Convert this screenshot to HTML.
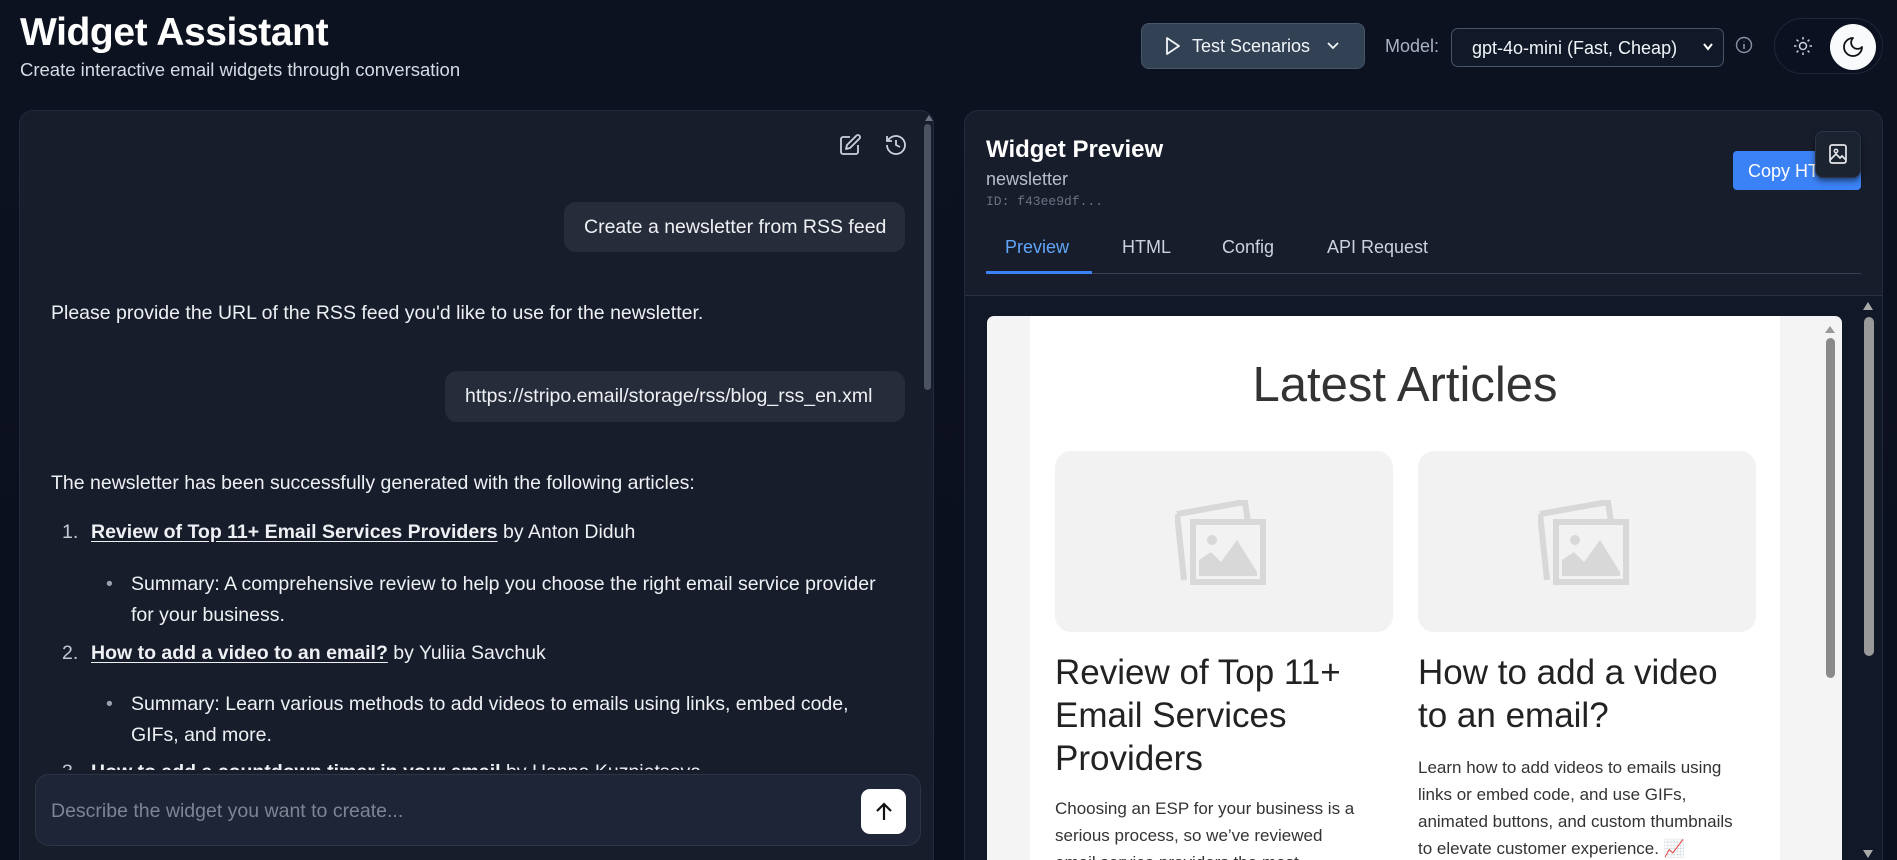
<!DOCTYPE html>
<html><head><meta charset="utf-8"><style>
*{box-sizing:border-box;margin:0;padding:0}
html{height:860px;overflow:hidden}
body{width:1897px;height:860px;overflow:hidden;background:linear-gradient(180deg,#0d1221 0%,#0a0f1d 100%);font-family:"Liberation Sans",sans-serif;color:#e8eaf0;position:relative}
.abs{position:absolute}
h1{position:absolute;left:20px;top:11px;font-size:39px;font-weight:700;color:#fff;letter-spacing:-0.4px}
.sub{left:20px;top:59px;font-size:18.5px;color:#d6dae2}
.btn{left:1141px;top:23px;width:224px;height:46px;background:#334155;border:1px solid #475569;border-radius:8px;display:flex;align-items:center;gap:10px;padding-left:22px;font-size:18px;color:#f1f5f9}
.sel{left:1451px;top:28px;width:273px;height:39px;background:#111827;border:1px solid #475569;border-radius:7px;font-size:18px;color:#f1f5f9;padding:9px 0 0 20px}
.panel{background:#171d2b;border:1px solid #232a3a;border-bottom:none;border-radius:14px 14px 0 0}
.bub{background:#262c39;border-radius:12px;font-size:19.5px;color:#eef0f4;padding:0 20px;display:flex;align-items:center;white-space:nowrap}
.t{font-size:19.5px;color:#eef0f4;white-space:nowrap}
.t u{font-weight:700;text-decoration:underline;text-underline-offset:3px}
.tab{top:237px;font-size:18px;color:#cbd2dc}
.card{background:#f2f2f2;border-radius:16px;width:338px;height:181px;top:451px}
.h3{font-size:35px;line-height:43px;color:#222;font-family:"Liberation Sans",Arial,sans-serif;width:340px}
.p{font-size:17px;line-height:27px;color:#333;width:340px}
</style></head><body>
<h1>Widget Assistant</h1>
<div class="abs sub">Create interactive email widgets through conversation</div>

<div class="abs btn"><svg width="18" height="20" viewBox="0 0 18 20"><path d="M3 2 L15 10 L3 18 Z" fill="none" stroke="#f1f5f9" stroke-width="1.8" stroke-linejoin="round"/></svg>Test Scenarios<svg width="14" height="10" viewBox="0 0 14 10" style="margin-left:6px"><path d="M2 2 L7 7 L12 2" fill="none" stroke="#f1f5f9" stroke-width="1.8"/></svg></div>
<div class="abs" style="left:1385px;top:36px;font-size:18px;color:#aab3c2">Model:</div>
<div class="abs sel">gpt-4o-mini (Fast, Cheap)<svg class="abs" style="left:250px;top:13px" width="12" height="10" viewBox="0 0 12 10"><path d="M2 2 L6 7 L10 2" fill="none" stroke="#fff" stroke-width="2"/></svg></div>
<svg class="abs" style="left:1735px;top:36px" width="18" height="18" viewBox="0 0 18 18"><circle cx="9" cy="9" r="7.5" fill="none" stroke="#8a93a3" stroke-width="1.4"/><path d="M9 8v5M9 5.5v.5" stroke="#8a93a3" stroke-width="1.6"/></svg>
<div class="abs" style="left:1774px;top:18px;width:109px;height:56px;border-radius:28px;background:#0b1120;border:1px solid #1f2737"></div>
<svg class="abs" style="left:1792px;top:35px" width="22" height="22" viewBox="0 0 22 22"><circle cx="11" cy="11" r="3.5" fill="none" stroke="#cbd2dc" stroke-width="1.5"/><g stroke="#cbd2dc" stroke-width="1.5"><path d="M11 2v2.5M11 17.5V20M2 11h2.5M17.5 11H20M4.6 4.6l1.8 1.8M15.6 15.6l1.8 1.8M4.6 17.4l1.8-1.8M15.6 6.4l1.8-1.8"/></g></svg>
<div class="abs" style="left:1830px;top:24px;width:46px;height:46px;border-radius:50%;background:#f8fafc"></div>
<svg class="abs" style="left:1841px;top:35px" width="24" height="24" viewBox="0 0 24 24"><path d="M12 3a6 6 0 0 0 9 9 9 9 0 1 1-9-9Z" fill="none" stroke="#111" stroke-width="1.8" stroke-linejoin="round"/></svg>

<!-- left panel -->
<div class="abs panel" style="left:19px;top:110px;width:915px;height:750px"></div>
<div class="abs" style="left:925px;top:115px;width:0;height:0;border-left:4px solid transparent;border-right:4px solid transparent;border-bottom:6px solid #6b7280"></div>
<div class="abs" style="left:924px;top:124px;width:7px;height:266px;background:#4b5260;border-radius:4px"></div>
<svg class="abs" style="left:838px;top:133px" width="24" height="24" viewBox="0 0 24 24"><path d="M12 4H5a2 2 0 0 0-2 2v13a2 2 0 0 0 2 2h13a2 2 0 0 0 2-2v-7" fill="none" stroke="#cbd2dc" stroke-width="1.8"/><path d="M18.4 2.6a2 2 0 0 1 3 3L12 15l-4 1 1-4Z" fill="none" stroke="#cbd2dc" stroke-width="1.8" stroke-linejoin="round"/></svg>
<svg class="abs" style="left:884px;top:133px" width="24" height="24" viewBox="0 0 24 24"><path d="M3 12a9 9 0 1 0 9-9 9.7 9.7 0 0 0-6.7 2.7L3 8" fill="none" stroke="#cbd2dc" stroke-width="1.8"/><path d="M3 3v5h5M12 7v5l4 2" fill="none" stroke="#cbd2dc" stroke-width="1.8"/></svg>
<div class="abs bub" style="left:564px;top:202px;width:341px;height:50px">Create a newsletter from RSS feed</div>
<div class="abs t" style="left:51px;top:302px">Please provide the URL of the RSS feed you'd like to use for the newsletter.</div>
<div class="abs bub" style="left:445px;top:371px;width:460px;height:51px">https://stripo.email/storage/rss/blog_rss_en.xml</div>
<div class="abs t" style="left:51px;top:472px">The newsletter has been successfully generated with the following articles:</div>
<div class="abs t" style="left:62px;top:521px;color:#c5cad3">1.</div>
<div class="abs t" style="left:91px;top:521px"><u>Review of Top 11+ Email Services Providers</u> by Anton Diduh</div>
<div class="abs t" style="left:106px;top:573px;color:#9aa1ad">•</div>
<div class="abs t" style="left:131px;top:569px;line-height:31px">Summary: A comprehensive review to help you choose the right email service provider<br>for your business.</div>
<div class="abs t" style="left:62px;top:642px;color:#c5cad3">2.</div>
<div class="abs t" style="left:91px;top:642px"><u>How to add a video to an email?</u> by Yuliia Savchuk</div>
<div class="abs t" style="left:106px;top:693px;color:#9aa1ad">•</div>
<div class="abs t" style="left:131px;top:689px;line-height:31px">Summary: Learn various methods to add videos to emails using links, embed code,<br>GIFs, and more.</div>
<div class="abs t" style="left:62px;top:761px;color:#c5cad3">3.</div>
<div class="abs t" style="left:91px;top:761px"><u>How to add a countdown timer in your email</u> by Hanna Kuznietsova</div>
<div class="abs" style="left:20px;top:770px;width:903px;height:100px;background:#171d2b"></div>
<div class="abs" style="left:35px;top:774px;width:886px;height:72px;background:#1e2536;border:1px solid #2c3446;border-radius:14px"></div>
<div class="abs t" style="left:51px;top:800px;color:#7d8594">Describe the widget you want to create...</div>
<div class="abs" style="left:861px;top:789px;width:45px;height:45px;background:#fff;border-radius:9px"></div>
<svg class="abs" style="left:872px;top:800px" width="24" height="24" viewBox="0 0 24 24"><path d="M12 20V4M5 11l7-7 7 7" fill="none" stroke="#111" stroke-width="2.2"/></svg>

<!-- right panel -->
<div class="abs panel" style="left:964px;top:110px;width:919px;height:750px;overflow:hidden">
 <div class="abs" style="left:0;top:184px;width:919px;height:600px;background:#111827;border-top:1px solid #2a3243"></div>
</div>
<div class="abs" style="left:986px;top:136px;font-size:24px;font-weight:700;color:#fff">Widget Preview</div>
<div class="abs" style="left:986px;top:169px;font-size:18px;color:#b8bfcb">newsletter</div>
<div class="abs" style="left:986px;top:194px;font-size:13px;font-family:'Liberation Mono',monospace;color:#6b7280">ID: f43ee9df...</div>
<div class="abs" style="left:1733px;top:151px;width:128px;height:39px;background:#3b82f6;border-radius:4px;color:#fff;font-size:18px;padding:10px 0 0 15px">Copy HTML</div>
<div class="abs" style="left:1815px;top:131px;width:46px;height:47px;background:#1b2230;border:1px solid #2c3446;border-radius:8px;box-shadow:0 3px 6px rgba(0,0,0,.5)"></div>
<svg class="abs" style="left:1827px;top:143px" width="22" height="22" viewBox="0 0 22 22"><rect x="3" y="2" width="16" height="18" rx="2" fill="none" stroke="#e5e7eb" stroke-width="1.7"/><circle cx="9" cy="8" r="1.7" fill="none" stroke="#e5e7eb" stroke-width="1.5"/><path d="M3 17l6-6 4 4 2-2 4 4" fill="none" stroke="#e5e7eb" stroke-width="1.7"/></svg>
<div class="abs tab" style="left:1005px;color:#60a5fa">Preview</div>
<div class="abs tab" style="left:1122px">HTML</div>
<div class="abs tab" style="left:1222px">Config</div>
<div class="abs tab" style="left:1327px">API Request</div>
<div class="abs" style="left:986px;top:273px;width:875px;height:1px;background:#374151"></div>
<div class="abs" style="left:986px;top:271px;width:106px;height:3px;background:#3b82f6"></div>
<div class="abs" style="left:1863px;top:302px;width:0;height:0;border-left:5px solid transparent;border-right:5px solid transparent;border-bottom:8px solid #aaa"></div>
<div class="abs" style="left:1864px;top:317px;width:10px;height:339px;background:#9a9a9a;border-radius:5px"></div>
<div class="abs" style="left:1863px;top:850px;width:0;height:0;border-left:5px solid transparent;border-right:5px solid transparent;border-top:8px solid #aaa"></div>

<!-- preview iframe -->
<div class="abs" style="left:987px;top:316px;width:855px;height:560px;background:#f4f4f4;border-radius:7px;overflow:hidden">
 <div class="abs" style="left:43px;top:0;width:750px;height:560px;background:#fff"></div>
 <div class="abs" style="left:839px;top:22px;width:9px;height:340px;background:#8a8a8a;border-radius:5px"></div>
 <div class="abs" style="left:838px;top:10px;width:0;height:0;border-left:5px solid transparent;border-right:5px solid transparent;border-bottom:7px solid #999"></div>
</div>
<div class="abs" style="left:1030px;top:357px;width:750px;text-align:center;font-size:49px;color:#333">Latest Articles</div>
<div class="abs card" style="left:1055px"></div>
<div class="abs card" style="left:1418px"></div>
<svg class="abs" style="left:1175px;top:500px" width="92" height="86" viewBox="0 0 92 86"><path d="M2 14 L70 2 L73 22" fill="none" stroke="#d8d8d8" stroke-width="6"/><path d="M2 14 L9 80" fill="none" stroke="#d8d8d8" stroke-width="6"/><rect x="18" y="22" width="70" height="60" fill="none" stroke="#d8d8d8" stroke-width="6"/><circle cx="37" cy="40" r="5" fill="#d8d8d8"/><path d="M24 76 L24 60 L36 52 L46 62 L62 40 L82 72 L82 76Z" fill="#d8d8d8"/></svg>
<svg class="abs" style="left:1538px;top:500px" width="92" height="86" viewBox="0 0 92 86"><path d="M2 14 L70 2 L73 22" fill="none" stroke="#d8d8d8" stroke-width="6"/><path d="M2 14 L9 80" fill="none" stroke="#d8d8d8" stroke-width="6"/><rect x="18" y="22" width="70" height="60" fill="none" stroke="#d8d8d8" stroke-width="6"/><circle cx="37" cy="40" r="5" fill="#d8d8d8"/><path d="M24 76 L24 60 L36 52 L46 62 L62 40 L82 72 L82 76Z" fill="#d8d8d8"/></svg>
<div class="abs h3" style="left:1055px;top:651px">Review of Top 11+<br>Email Services<br>Providers</div>
<div class="abs h3" style="left:1418px;top:651px">How to add a video<br>to an email?</div>
<div class="abs p" style="left:1055px;top:795px">Choosing an ESP for your business is a<br>serious process, so we’ve reviewed<br>email service providers the most</div>
<div class="abs p" style="left:1418px;top:754px">Learn how to add videos to emails using<br>links or embed code, and use GIFs,<br>animated buttons, and custom thumbnails<br>to elevate customer experience. 📈</div>
</body></html>
